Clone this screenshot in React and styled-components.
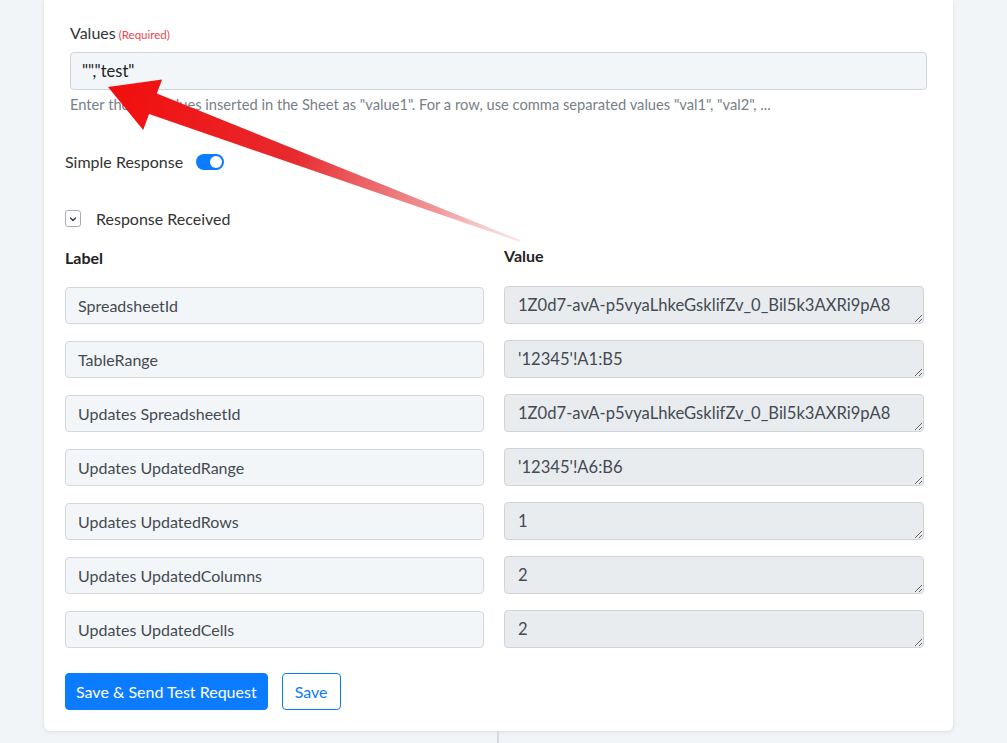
import React from 'react';
import styled, { createGlobalStyle } from 'styled-components';

const GlobalStyle = createGlobalStyle`
  html, body {
    margin: 0;
    padding: 0;
    background: #f2f5f8;
    font-family: Lato, "Open Sans", sans-serif;
    color: #333;
  }
  * { box-sizing: border-box; }
`;

const Page = styled.div`
  position: relative;
  width: 1007px;
  height: 743px;
  overflow: hidden;
  padding-left: 44px;
`;

const Card = styled.div`
  width: 909px;
  background: #fff;
  border-radius: 0 0 6px 6px;
  box-shadow: 0 1px 4px rgba(40, 55, 80, 0.12);
  padding: 23px 29px 21px 21px;
`;

const Connector = styled.div`
  width: 2px;
  height: 20px;
  margin-left: 453px;
  background: #d6dae1;
`;

const ValuesGroup = styled.div`
  padding-left: 5px;
`;

const FieldLabel = styled.div`
  font-size: 16px;
  line-height: 19px;
  color: #333;
  margin-bottom: 8px;
  span {
    font-size: 11.5px;
    color: #e5484d;
    margin-left: 3px;
  }
`;

const ValueInput = styled.div`
  height: 38px;
  width: 857px;
  background: #f3f6f9;
  border: 1px solid #cfd4db;
  border-radius: 4px;
  padding: 0 11px;
  display: flex;
  align-items: center;
  font-size: 16.5px;
  color: #222;
`;

const HelpText = styled.div`
  font-size: 14.7px;
  line-height: 18px;
  color: #777f88;
  margin-top: 5px;
`;

const ToggleRow = styled.div`
  display: flex;
  align-items: center;
  gap: 13px;
  font-size: 16px;
  line-height: 19px;
  margin-top: 39px;
`;

const Toggle = styled.div`
  width: 28px;
  height: 16px;
  border-radius: 8px;
  background: ${p => (p.$on ? '#0b7bff' : '#ccd2da')};
  position: relative;
  &::after {
    content: '';
    position: absolute;
    top: 2px;
    left: ${p => (p.$on ? '14px' : '2px')};
    width: 12px;
    height: 12px;
    border-radius: 50%;
    background: #fff;
  }
`;

const CollapseRow = styled.div`
  display: flex;
  align-items: center;
  gap: 15px;
  font-size: 16px;
  line-height: 19px;
  margin-top: 38px;
`;

const ChevronBox = styled.div`
  width: 16px;
  height: 17px;
  border: 1px solid #a7adb5;
  border-radius: 3px;
  display: flex;
  align-items: center;
  justify-content: center;
`;

const Grid = styled.div`
  display: grid;
  grid-template-columns: 419px 420px;
  column-gap: 20px;
  row-gap: 16px;
  margin-top: 20px;
  align-items: center;
`;

const ColHead = styled.div`
  font-size: 16px;
  line-height: 19px;
  font-weight: 700;
  color: #222;
  margin-top: ${p => p.$offset || 0}px;
  margin-bottom: 3px;
  align-self: start;
`;

const LabelBox = styled.div`
  height: 37px;
  background: #f3f6f9;
  border: 1px solid #d3d8de;
  border-radius: 4px;
  padding: 0 12px;
  display: flex;
  align-items: center;
  font-size: 16px;
  color: #444a52;
`;

const ValueArea = styled.textarea`
  display: block;
  height: 38px;
  width: 420px;
  background: #e9ecef;
  border: 1px solid #cfd4da;
  border-radius: 4px;
  padding: 8px 13px;
  font-family: Lato, "Open Sans", sans-serif;
  font-size: 16.6px;
  line-height: 20px;
  color: #444a52;
  resize: vertical;
  overflow: hidden;
  &:focus { outline: none; }
`;

const Actions = styled.div`
  display: flex;
  gap: 14px;
  margin-top: 25px;
`;

const Button = styled.button`
  height: 37px;
  padding: ${p => (p.$primary ? '0 10px' : '0 12px')};
  border-radius: 4px;
  font-family: Lato, "Open Sans", sans-serif;
  font-size: 16px;
  cursor: pointer;
  border: 1px solid #0b7bff;
  background: ${p => (p.$primary ? '#0b7bff' : '#fff')};
  color: ${p => (p.$primary ? '#fff' : '#0b7bff')};
`;

const ArrowLayer = styled.svg`
  position: absolute;
  left: 0;
  top: 0;
  pointer-events: none;
`;

const rows = [
  ['SpreadsheetId', '1Z0d7-avA-p5vyaLhkeGsklifZv_0_Bil5k3AXRi9pA8'],
  ['TableRange', "'12345'!A1:B5"],
  ['Updates SpreadsheetId', '1Z0d7-avA-p5vyaLhkeGsklifZv_0_Bil5k3AXRi9pA8'],
  ['Updates UpdatedRange', "'12345'!A6:B6"],
  ['Updates UpdatedRows', '1'],
  ['Updates UpdatedColumns', '2'],
  ['Updates UpdatedCells', '2'],
];

function Arrow() {
  // tip near the values input, tail fading out to the lower right
  const tip = [108, 87];
  const tail = [520, 241];
  const dx = tail[0] - tip[0];
  const dy = tail[1] - tip[1];
  const len = Math.hypot(dx, dy);
  const ux = dx / len;
  const uy = dy / len;
  const nx = -uy;
  const ny = ux;
  const headLen = 48;
  const bx = tip[0] + ux * headLen;
  const by = tip[1] + uy * headLen;
  const pt = (x, y) => `${x.toFixed(1)},${y.toFixed(1)}`;
  const points = [
    pt(tip[0], tip[1]),
    pt(bx + nx * 28, by + ny * 28),
    pt(bx + nx * 11, by + ny * 11),
    pt(tail[0] + nx * 1, tail[1] + ny * 1),
    pt(tail[0] - nx * 1, tail[1] - ny * 1),
    pt(bx - nx * 11, by - ny * 11),
    pt(bx - nx * 26, by - ny * 26),
  ].join(' ');
  return (
    <ArrowLayer width="1007" height="743">
      <defs>
        <linearGradient id="arrowFade" gradientUnits="userSpaceOnUse" x1={tip[0]} y1={tip[1]} x2={tail[0]} y2={tail[1]}>
          <stop offset="0" stopColor="#f30d0d" />
          <stop offset="0.45" stopColor="#e62a2e" />
          <stop offset="0.8" stopColor="#ee8c8e" stopOpacity="0.9" />
          <stop offset="1" stopColor="#f6c4c5" stopOpacity="0.4" />
        </linearGradient>
      </defs>
      <polygon points={points} fill="url(#arrowFade)" />
    </ArrowLayer>
  );
}

export default function App() {
  return (
    <Page>
      <GlobalStyle />
      <Card>
        <ValuesGroup>
          <FieldLabel>Values<span>(Required)</span></FieldLabel>
          <ValueInput>"","test"</ValueInput>
          <HelpText>Enter the row values inserted in the Sheet as "value1". For a row, use comma separated values "val1", "val2", ...</HelpText>
        </ValuesGroup>
        <ToggleRow>
          Simple Response
          <Toggle $on />
        </ToggleRow>
        <CollapseRow>
          <ChevronBox>
            <svg width="10" height="10" viewBox="0 0 10 10">
              <path d="M2.5 4 L5 6.5 L7.5 4" fill="none" stroke="#333" strokeWidth="1.3" strokeLinecap="round" strokeLinejoin="round" />
            </svg>
          </ChevronBox>
          Response Received
        </CollapseRow>
        <Grid>
          <ColHead>Label</ColHead>
          <ColHead $offset={-2}>Value</ColHead>
          {rows.map(([label, value]) => (
            <React.Fragment key={label}>
              <LabelBox>{label}</LabelBox>
              <ValueArea readOnly value={value} />
            </React.Fragment>
          ))}
        </Grid>
        <Actions>
          <Button $primary>Save &amp; Send Test Request</Button>
          <Button>Save</Button>
        </Actions>
      </Card>
      <Connector />
      <Arrow />
    </Page>
  );
}
